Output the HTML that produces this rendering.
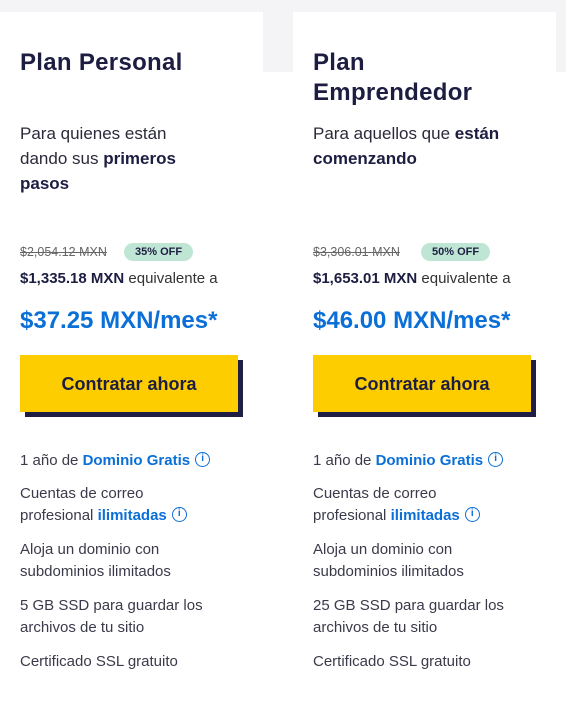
<!DOCTYPE html>
<html><head><meta charset="utf-8"><style>
*{margin:0;padding:0;box-sizing:border-box}
body{width:566px;height:691px;overflow:hidden;background:#fff;font-family:"Liberation Sans",sans-serif;color:#3a3a4a;position:relative}
.bg{position:absolute;left:0;top:0;width:566px;height:72px;background:#f4f4f6}
.card{position:absolute;top:12px;width:263px;height:700px;background:#fff}
.in{position:absolute;left:20px;top:0;width:240px}
h2{position:absolute;top:36px;font-size:24px;line-height:30px;color:#1d1d42;font-weight:bold;letter-spacing:0.3px}
.desc{position:absolute;top:109px;font-size:17px;line-height:25px;color:#2a2a3a;width:180px}
.desc b{color:#1d1d42}
.old{position:absolute;top:232px;font-size:12.5px;color:#666;text-decoration:line-through;line-height:16px}
.off{position:absolute;top:231px;height:18px;background:#bfe6d4;border-radius:9px;font-size:11px;font-weight:bold;color:#1d1d42;padding:0 11px;line-height:18px}
.eq{position:absolute;top:257px;font-size:15px;line-height:20px;color:#333;white-space:nowrap}
.eq b{color:#1d1d42}
.big{position:absolute;top:294px;font-size:24px;font-weight:bold;color:#0a6fd6;line-height:30px;white-space:nowrap}
.btn{position:absolute;top:343px;width:218px;height:57px;background:#fecd00;box-shadow:5px 5px 0 #1f1f45;font-size:18px;font-weight:bold;color:#1d1d42;text-align:center;line-height:58px}
.f{position:absolute;font-size:15px;line-height:22px;color:#3a3a4a;width:240px}
.f b{color:#0a6fd6}
.i{display:inline-block;width:15px;height:15px;border:1.5px solid #0a6fd6;border-radius:50%;color:#0a6fd6;font-size:10px;line-height:12px;text-align:center;font-weight:bold;vertical-align:middle;position:relative;top:-2px;margin-left:5px}
</style></head><body>
<div class="bg"></div>
<div class="card" style="left:0">
<div class="in">
<h2>Plan Personal</h2>
<div class="desc">Para quienes están dando sus <b>primeros pasos</b></div>
<div class="old">$2,054.12 MXN</div>
<div class="off" style="left:104px">35% OFF</div>
<div class="eq"><b>$1,335.18 MXN</b> equivalente a</div>
<div class="big">$37.25 MXN/mes*</div>
<div class="btn">Contratar ahora</div>
<div class="f" style="top:438px">1 año de <b>Dominio Gratis</b><span class="i">i</span></div>
<div class="f" style="top:471px">Cuentas de correo<br>profesional <b>ilimitadas</b><span class="i">i</span></div>
<div class="f" style="top:527px">Aloja un dominio con<br>subdominios ilimitados</div>
<div class="f" style="top:583px">5 GB SSD para guardar los<br>archivos de tu sitio</div>
<div class="f" style="top:639px">Certificado SSL gratuito</div>
</div></div>
<div class="card" style="left:293px">
<div class="in">
<h2>Plan<br>Emprendedor</h2>
<div class="desc" style="width:230px">Para aquellos que <b>están comenzando</b></div>
<div class="old">$3,306.01 MXN</div>
<div class="off" style="left:108px">50% OFF</div>
<div class="eq"><b>$1,653.01 MXN</b> equivalente a</div>
<div class="big">$46.00 MXN/mes*</div>
<div class="btn">Contratar ahora</div>
<div class="f" style="top:438px">1 año de <b>Dominio Gratis</b><span class="i">i</span></div>
<div class="f" style="top:471px">Cuentas de correo<br>profesional <b>ilimitadas</b><span class="i">i</span></div>
<div class="f" style="top:527px">Aloja un dominio con<br>subdominios ilimitados</div>
<div class="f" style="top:583px">25 GB SSD para guardar los<br>archivos de tu sitio</div>
<div class="f" style="top:639px">Certificado SSL gratuito</div>
</div></div>
</body></html>
